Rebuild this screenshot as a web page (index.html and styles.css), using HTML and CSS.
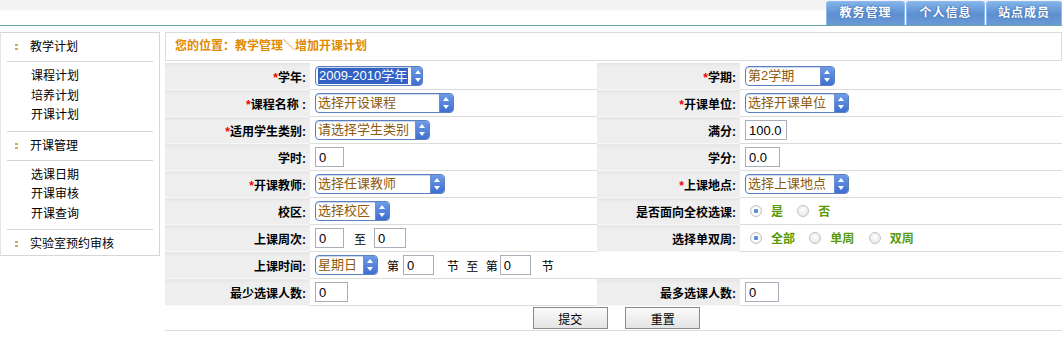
FILE: index.html
```html
<!DOCTYPE html>
<html lang="zh-CN">
<head>
    <meta charset="UTF-8">
    <title>增加开课计划</title>
    <link rel="stylesheet" href="styles.css">
</head>
<body>
    <div class="header">
        <div class="tabs">
            <a class="tab" href="#">教务管理</a>
            <a class="tab" href="#">个人信息</a>
            <a class="tab last" href="#">站点成员</a>
        </div>
    </div>
    <div class="page">
        <div class="sidebar">
            <div class="menu-title"><span class="dot"></span>教学计划</div>
            <ul class="menu-list">
                <li>课程计划</li>
                <li>培养计划</li>
                <li>开课计划</li>
            </ul>
            <div class="menu-title"><span class="dot"></span>开课管理</div>
            <ul class="menu-list">
                <li>选课日期</li>
                <li>开课审核</li>
                <li>开课查询</li>
            </ul>
            <div class="menu-title last"><span class="dot"></span>实验室预约审核</div>
        </div>
        <div class="main">
            <div class="crumb">您的位置：教学管理＼增加开课计划</div>
            <form class="plan">
                <table>
                    <colgroup>
                        <col class="c-label1"><col class="c-val1"><col class="c-label2"><col>
                    </colgroup>
                    <tr>
                        <td class="lbl"><em>*</em>学年:</td>
                        <td><span class="sel w108"><span class="txt hl">2009-2010学年</span><span class="spin"></span></span></td>
                        <td class="lbl"><em>*</em>学期:</td>
                        <td><span class="sel w90"><span class="txt">第2学期</span><span class="spin"></span></span></td>
                    </tr>
                    <tr>
                        <td class="lbl"><em>*</em>课程名称 :</td>
                        <td><span class="sel w139"><span class="txt">选择开设课程</span><span class="spin"></span></span></td>
                        <td class="lbl"><em>*</em>开课单位:</td>
                        <td><span class="sel w104"><span class="txt">选择开课单位</span><span class="spin"></span></span></td>
                    </tr>
                    <tr>
                        <td class="lbl"><em>*</em>适用学生类别:</td>
                        <td><span class="sel w115"><span class="txt">请选择学生类别</span><span class="spin"></span></span></td>
                        <td class="lbl">满分:</td>
                        <td><input class="box w41" type="text" value="100.0"></td>
                    </tr>
                    <tr>
                        <td class="lbl">学时:</td>
                        <td><input class="box w28" type="text" value="0"></td>
                        <td class="lbl">学分:</td>
                        <td><input class="box w34" type="text" value="0.0"></td>
                    </tr>
                    <tr>
                        <td class="lbl"><em>*</em>开课教师:</td>
                        <td><span class="sel w130"><span class="txt">选择任课教师</span><span class="spin"></span></span></td>
                        <td class="lbl"><em>*</em>上课地点:</td>
                        <td><span class="sel w104"><span class="txt">选择上课地点</span><span class="spin"></span></span></td>
                    </tr>
                    <tr>
                        <td class="lbl">校区:</td>
                        <td><span class="sel w75"><span class="txt">选择校区</span><span class="spin"></span></span></td>
                        <td class="lbl">是否面向全校选课:</td>
                        <td>
                            <label class="opt"><input type="radio" name="all" checked>是</label>
                            <label class="opt"><input type="radio" name="all">否</label>
                        </td>
                    </tr>
                    <tr>
                        <td class="lbl">上课周次:</td>
                        <td class="inline">
                            <input class="box w28" type="text" value="0">
                            <span class="sep">至</span>
                            <input class="box w31" type="text" value="0">
                        </td>
                        <td class="lbl">选择单双周:</td>
                        <td>
                            <label class="opt"><input type="radio" name="week" checked>全部</label>
                            <label class="opt"><input type="radio" name="week">单周</label>
                            <label class="opt"><input type="radio" name="week">双周</label>
                        </td>
                    </tr>
                    <tr>
                        <td class="lbl">上课时间:</td>
                        <td colspan="3" class="inline">
                            <span class="sel w63"><span class="txt">星期日</span><span class="spin"></span></span>
                            <span class="word">第</span><input class="box w30" type="text" value="0">
                            <span class="word gap">节 至 第</span><input class="box w30" type="text" value="0">
                            <span class="word end">节</span>
                        </td>
                    </tr>
                    <tr>
                        <td class="lbl">最少选课人数:</td>
                        <td><input class="box w32" type="text" value="0"></td>
                        <td class="lbl">最多选课人数:</td>
                        <td><input class="box w33" type="text" value="0"></td>
                    </tr>
                    <tr>
                        <td colspan="4" class="actions">
                            <button type="submit">提交</button>
                            <button type="reset">重置</button>
                        </td>
                    </tr>
                </table>
            </form>
        </div>
    </div>
</body>
</html>
```

FILE: styles.css
```css
body {
    margin: 0;
    font-family: "Liberation Sans", "Noto Sans CJK SC", sans-serif;
    font-size: 12px;
    color: #000;
    background: #fff;
}
.header {
    height: 25px;
    background: linear-gradient(#f2f2f2 0, #f4f4f4 10px, #fff 11px);
    border-bottom: 1px solid #6aa5a5;
    display: flex;
    justify-content: flex-end;
    align-items: flex-end;
}
.tabs {
    display: flex;
    gap: 1px;
}
.tab {
    display: block;
    width: 77px;
    height: 23px;
    line-height: 23px;
    text-align: center;
    color: #fff;
    font-weight: bold;
    text-decoration: none;
    letter-spacing: 1px;
    background: linear-gradient(#82b3e8, #5d8fd0 55%, #6a9ad6);
    border: 1px solid #8fbaf0;
    border-bottom: none;
    border-radius: 3px 3px 0 0;
    text-shadow: 0 0 2px #2d5a9a;
}
.tab.last {
    width: 74px;
}
.page {
    display: flex;
    gap: 5px;
    margin-top: 6px;
}
.sidebar {
    width: 160px;
    height: 224px;
    border: 1px solid #d6d6d6;
    border-left-color: #e4e4e4;
    padding: 0 6px;
    box-sizing: border-box;
}
.menu-title {
    height: 28px;
    line-height: 26px;
    border-bottom: 1px solid #d4d4d4;
    padding-left: 8px;
    display: flex;
    align-items: center;
}
.menu-title.last {
    border-bottom: none;
}
.dot {
    width: 3px;
    height: 6px;
    margin-right: 12px;
    background: linear-gradient(#c8b060 0 2px, transparent 2px 4px, #c8b060 4px);
}
.menu-list {
    list-style: none;
    margin: 0;
    padding: 5px 0 5px 24px;
    border-bottom: 1px solid #d4d4d4;
}
.menu-list li {
    line-height: 19.5px;
}
.main {
    flex: 1;
}
.crumb {
    height: 27px;
    line-height: 27px;
    border: 1px solid #dcdcdc;
    padding-left: 9px;
    color: #e08a00;
    font-weight: bold;
}
.plan {
    margin-top: 2px;
}
table {
    width: 100%;
    border-collapse: collapse;
    table-layout: fixed;
    border-bottom: 1px solid #d6d6d6;
}
.c-label1 { width: 145px; }
.c-val1 { width: 287px; }
.c-label2 { width: 143px; }
td {
    height: 26px;
    padding: 0 0 0 5px;
    border-bottom: 1px solid #dcdcdc;
    white-space: nowrap;
}
td.lbl {
    background: linear-gradient(#e4e4e4, #eeeeee 4px);
    text-align: right;
    font-weight: bold;
    padding: 0 4px 0 0;
    border-bottom-color: #f6f6f6;
}
td.lbl em {
    color: #e00;
    font-style: normal;
}
.inline {
    font-size: 0;
}
.inline > * {
    font-size: 12px;
    vertical-align: middle;
}
.sel {
    display: inline-flex;
    align-items: center;
    height: 20px;
    box-sizing: border-box;
    border: 1px solid #5b7fbf;
    border-radius: 4px;
    background: #fff;
    box-shadow: inset 0 1px 1px #c8d4ea;
    vertical-align: middle;
    overflow: hidden;
}
.sel .txt {
    flex: 1;
    padding: 0 2px;
    color: #8d5a0e;
    font-size: 13px;
    line-height: 16px;
}
.sel .txt.hl {
    flex: none;
    margin: 0 3px 0 2px;
    padding: 0 1px;
    background: #3262c4;
    color: #fff;
}
.sel .spin {
    width: 13px;
    height: 18px;
    margin-left: auto;
    border-left: 1px solid #6b8fd0;
    background: linear-gradient(#6f9be6, #3d6fd0);
    position: relative;
}
.sel .spin::before,
.sel .spin::after {
    content: "";
    position: absolute;
    left: 3px;
    border-left: 3.5px solid transparent;
    border-right: 3.5px solid transparent;
}
.sel .spin::before {
    top: 3px;
    border-bottom: 4px solid #fff;
}
.sel .spin::after {
    bottom: 3px;
    border-top: 4px solid #fff;
}
.w63 { width: 63px; }
.w75 { width: 75px; }
.w90 { width: 90px; }
.w104 { width: 104px; }
.w108 { width: 108px; }
.w115 { width: 115px; }
.w130 { width: 130px; }
.w139 { width: 139px; }
.box {
    height: 20px;
    box-sizing: border-box;
    border: 1px solid #a9aeb8;
    padding: 0 3px;
    font-family: "Liberation Sans", sans-serif;
    font-size: 13px;
    vertical-align: middle;
    margin: 0;
}
.w28 { width: 29px; }
.w30 { width: 31px; }
.w31 { width: 32px; }
.w32 { width: 33px; }
.w33 { width: 34px; }
.w34 { width: 35px; }
.w41 { width: 42px; }
.sep {
    margin: 0 8px 0 10px;
}
.word {
    margin: 0 4px 0 9px;
}
.word.gap {
    margin: 0 2px 0 13px;
    word-spacing: 4px;
}
.word.end {
    margin-left: 11px;
}
.opt {
    display: inline-flex;
    align-items: center;
    margin-left: 5px;
    margin-right: 6px;
    color: #5a9a08;
    font-weight: bold;
}
.opt input {
    appearance: none;
    width: 12px;
    height: 12px;
    margin: 0 9px 0 0;
    border: 1px solid #c4c4c4;
    border-radius: 50%;
    background: radial-gradient(circle at 50% 40%, #fff, #e2e2e2);
}
.opt input:checked {
    background: radial-gradient(circle, #5b8ed6 0 2px, #fff 2.5px, #e6e6e6);
}
.actions {
    height: 24px;
    text-align: center;
    padding: 0 0 0 6px;
}
.actions button {
    width: 75px;
    height: 22px;
    margin: 0 7px;
    font-family: "Noto Sans CJK SC", sans-serif;
    font-size: 12px;
    border: 1px solid #8a8a8a;
    background: linear-gradient(#fafafa, #e4e4e4);
    color: #000;
}
```
